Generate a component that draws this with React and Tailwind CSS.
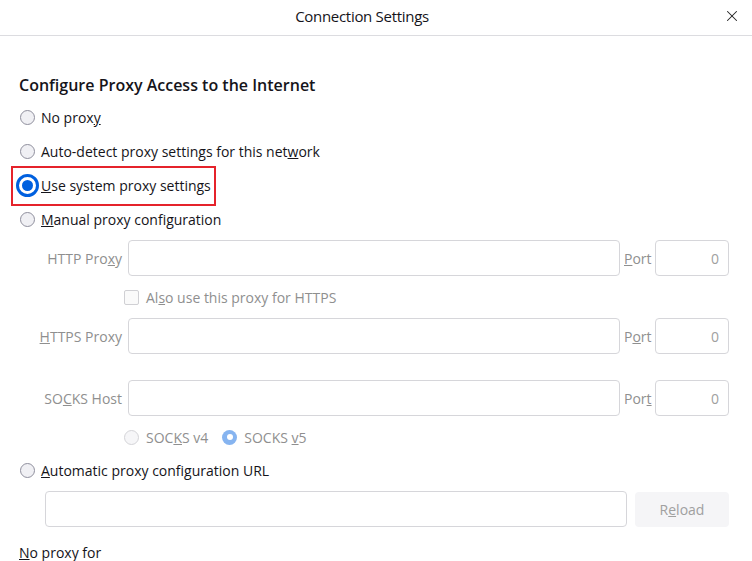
import { X } from 'lucide-react';

function Radio({ checked }) {
  if (checked) {
    return (
      <span className="flex h-[23px] w-[23px] shrink-0 items-center justify-center rounded-full border-[3px] border-[#0060df] bg-white">
        <span className="block h-[11px] w-[11px] rounded-full bg-[#0060df]" />
      </span>
    );
  }
  return <span className="block h-[15px] w-[15px] shrink-0 rounded-full border border-[#8f8f9d] bg-[#f0f0f4]" />;
}

function DisabledRadio({ checked }) {
  if (checked) {
    return (
      <span className="flex h-[15px] w-[15px] shrink-0 items-center justify-center rounded-full bg-[#86b4f0]">
        <span className="block h-[6px] w-[6px] rounded-full bg-white" />
      </span>
    );
  }
  return <span className="block h-[15px] w-[15px] shrink-0 rounded-full border border-[#d4d4d8] bg-[#f6f6f8]" />;
}

function Field({ className = '' }) {
  return <div className={'h-[36px] rounded-[4px] border border-[#d6d6da] bg-white ' + className} />;
}

function ProxyRow({ label, port }) {
  return (
    <div className="flex h-[36px] items-center">
      <div className="w-[104px] pr-px text-right text-[#8f8f8f]">{label}</div>
      <Field className="ml-[5px] flex-1" />
      <div className="w-[35px] pl-[4px] text-[#8f8f8f]">{port}</div>
      <div className="flex h-[36px] w-[74px] items-center justify-end rounded-[4px] border border-[#d6d6da] bg-white pr-[9px] text-[#a0a0a0]">
        0
      </div>
    </div>
  );
}

export default function App() {
  return (
    <div className="h-[561px] w-[752px] overflow-hidden bg-white text-[14px] text-[#15141a]" style={{ fontFamily: '"Open Sans", "Noto Sans", sans-serif' }}>
      <div className="relative flex h-[36px] items-center justify-center border-b border-[#dcdce0] pb-[2px] pr-[28px]">
        <span className="text-[15px] tracking-[-0.3px]">Connection Settings</span>
        <X size={18} strokeWidth={1.4} className="absolute right-[11px] top-[7px] text-[#222]" />
      </div>

      <div className="pl-[19px] pr-[23px]">
        <h2 className="mt-[38px] h-[22px] text-[16px] font-semibold leading-[22px]">Configure Proxy Access to the Internet</h2>

        <div className="mt-[4px]">
          <label className="flex h-[34px] items-center">
            <span className="ml-px"><Radio /></span>
            <span className="ml-[6px]">No prox<u>y</u></span>
          </label>
          <label className="flex h-[34px] items-center">
            <span className="ml-px"><Radio /></span>
            <span className="ml-[6px]">Auto-detect proxy settings for this net<u>w</u>ork</span>
          </label>
          <label className="relative flex h-[34px] items-center">
            <span className="-ml-[3px]"><Radio checked /></span>
            <span className="ml-[2px]"><u>U</u>se system proxy settings</span>
            <span className="absolute -left-[8px] -top-[2px] h-[40px] w-[205px] border-2 border-[#e5232b]" />
          </label>
          <label className="flex h-[34px] items-center">
            <span className="ml-px"><Radio /></span>
            <span className="ml-[6px]"><u>M</u>anual proxy configuration</span>
          </label>
        </div>

        <div className="mt-[4px]">
          <ProxyRow label={<>HTTP Pro<u>x</u>y</>} port={<><u>P</u>ort</>} />
          <div className="flex h-[42px] items-center pl-[105px]">
            <span className="block h-[15px] w-[15px] rounded-[2px] border border-[#d0d0d4] bg-[#fafafa]" />
            <span className="ml-[7px] text-[#8f8f8f]">Al<u>s</u>o use this proxy for HTTPS</span>
          </div>
          <ProxyRow label={<><u>H</u>TTPS Proxy</>} port={<>P<u>o</u>rt</>} />
          <div className="h-[26px]" />
          <ProxyRow label={<>SO<u>C</u>KS Host</>} port={<>Por<u>t</u></>} />
          <div className="flex h-[42px] items-center pl-[105px] text-[#8f8f8f]">
            <DisabledRadio />
            <span className="ml-[7px]">SOC<u>K</u>S v4</span>
            <span className="ml-[14px]"><DisabledRadio checked /></span>
            <span className="ml-[7px]">SOCKS <u>v</u>5</span>
          </div>
        </div>

        <label className="flex h-[24px] items-center">
          <span className="ml-px"><Radio /></span>
          <span className="ml-[6px]"><u>A</u>utomatic proxy configuration URL</span>
        </label>

        <div className="mt-[9px] flex items-center pl-[26px]">
          <Field className="flex-1" />
          <button className="ml-[8px] h-[35px] w-[94px] rounded-[4px] bg-[#f5f5f7] text-[#a0a0a0]">
            R<u>e</u>load
          </button>
        </div>

        <div className="mt-[16px] h-[20px] leading-[20px]"><u>N</u>o proxy for</div>
      </div>
    </div>
  );
}
